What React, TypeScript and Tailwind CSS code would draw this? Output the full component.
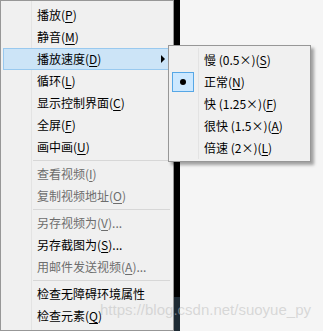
import React from "react";

type Item =
  | { sep: true }
  | { label: string; key?: string; suffix?: string; disabled?: boolean; sub?: boolean; active?: boolean };

const mainItems: Item[] = [
  { label: "播放", key: "P" },
  { label: "静音", key: "M" },
  { label: "播放速度", key: "D", sub: true, active: true },
  { label: "循环", key: "L" },
  { label: "显示控制界面", key: "C" },
  { label: "全屏", key: "F" },
  { label: "画中画", key: "U" },
  { sep: true },
  { label: "查看视频", key: "I", disabled: true },
  { label: "复制视频地址", key: "O", disabled: true },
  { sep: true },
  { label: "另存视频为", key: "V", suffix: "...", disabled: true },
  { label: "另存截图为", key: "S", suffix: "..." },
  { label: "用邮件发送视频", key: "A", suffix: "...", disabled: true },
  { sep: true },
  { label: "检查无障碍环境属性" },
  { label: "检查元素", key: "Q" },
];

const speedItems = [
  { label: "慢 (0.5×)", key: "S" },
  { label: "正常", key: "N", checked: true },
  { label: "快 (1.25×)", key: "F" },
  { label: "很快 (1.5×)", key: "A" },
  { label: "倍速 (2×)", key: "L" },
];

const Label = ({ label, k, suffix }: { label: string; k?: string; suffix?: string }) => (
  <span className="whitespace-nowrap">
    {label}
    {k && (
      <>
        (<span className="underline underline-offset-2">{k}</span>)
      </>
    )}
    {suffix}
  </span>
);

export default function App() {
  return (
    <div
      className="relative flex w-[323px] h-[331px] overflow-hidden bg-[#f5f5f5] text-[12px] leading-none"
      style={{ fontFamily: '"Noto Sans CJK SC", "Noto Sans", sans-serif' }}
    >
      {/* main context menu */}
      <div className="relative w-[174px] h-[331px] shrink-0 bg-[#f0f0f0] border border-[#979797] pt-[3px] pb-[2px] px-[2px]">
        <div className="absolute left-[30px] top-0 bottom-0 w-px bg-[#e3e3e3]" />
        {mainItems.map((it, i) =>
          "sep" in it ? (
            <div key={i} className="h-[5px] flex items-center pl-[30px] pr-[1px]">
              <div className="h-px w-full bg-[#d7d7d7]" />
            </div>
          ) : (
            <div
              key={i}
              className={
                "relative h-[22px] flex items-center pl-[33px] pr-2 border " +
                (it.active ? "bg-[#cce4f7] border-[#99c9ef]" : "border-transparent") +
                (it.disabled ? " text-[#6d6d6d]" : " text-black")
              }
            >
              <Label label={it.label} k={it.key} suffix={it.suffix} />
              {it.sub && (
                <span className="absolute right-[5px] top-1/2 -translate-y-1/2 w-0 h-0 border-y-[4px] border-y-transparent border-l-[4px] border-l-black" />
              )}
            </div>
          )
        )}
      </div>

      {/* window edge behind the menu */}
      <div className="flex flex-col w-[6px] shrink-0">
        <div className="h-[297px] bg-black" />
        <div className="flex-1 bg-[#1e2a33]" />
      </div>
      <div className="flex-1" />

      {/* speed submenu */}
      <div className="absolute left-[168px] top-[45px] w-[143px] bg-[#f0f0f0] border border-[#979797] pt-[3px] pb-[2px] px-[2px] shadow-[3px_3px_3px_rgba(0,0,0,0.35)]">
        <div className="absolute left-[29px] top-[2px] bottom-[2px] w-px bg-[#e3e3e3]" />
        {speedItems.map((it, i) => (
          <div key={i} className="relative h-[22px] flex items-center pl-[33px] text-black">
            {it.checked && (
              <span className="absolute left-[1px] top-[1px] w-[22px] h-[20px] bg-[#cce8ff] border border-[#56a7e6] flex items-center justify-center">
                <span className="w-[6px] h-[6px] rounded-full bg-black" />
              </span>
            )}
            <Label label={it.label} k={it.key} />
          </div>
        ))}
      </div>

      {/* watermark */}
      <div
        className="absolute left-[100px] top-[302px] text-[15px] leading-none text-[rgba(190,190,190,0.55)] pointer-events-none"
        style={{ fontFamily: '"Liberation Sans", Arial, sans-serif' }}
      >
        https://blog.csdn.net/suoyue_py
      </div>
    </div>
  );
}
